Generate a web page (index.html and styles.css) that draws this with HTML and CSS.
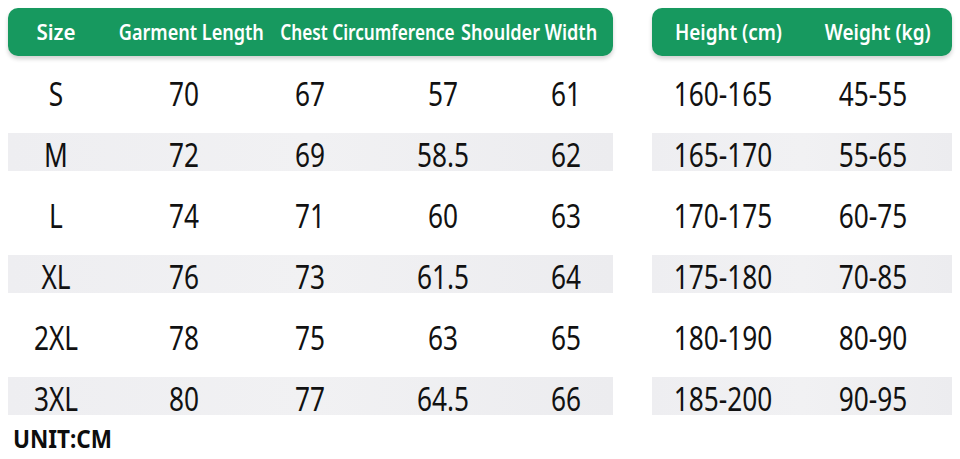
FILE: index.html
```html
<!DOCTYPE html>
<html>
<head>
<meta charset="utf-8">
<link rel="stylesheet" href="styles.css">
</head>
<body>
<div class="page">
  <div class="tables">
    <div class="table left">
      <div class="head">
        <div class="hc"><span class="hl wide">Size</span></div>
        <div class="hc"><span class="hl">Garment Length</span></div>
        <div class="hc"><span class="hl tight">Chest Circumference</span></div>
        <div class="hc"><span class="hl">Shoulder Width</span></div>
      </div>
      <div class="rows">
        <div class="row"><span class="c">S</span><span class="c">70</span><span class="c">67</span><span class="c">57</span><span class="c">61</span></div>
        <div class="row band"><span class="c">M</span><span class="c">72</span><span class="c">69</span><span class="c">58.5</span><span class="c">62</span></div>
        <div class="row"><span class="c">L</span><span class="c">74</span><span class="c">71</span><span class="c">60</span><span class="c">63</span></div>
        <div class="row band"><span class="c">XL</span><span class="c">76</span><span class="c">73</span><span class="c">61.5</span><span class="c">64</span></div>
        <div class="row"><span class="c">2XL</span><span class="c">78</span><span class="c">75</span><span class="c">63</span><span class="c">65</span></div>
        <div class="row band"><span class="c">3XL</span><span class="c">80</span><span class="c">77</span><span class="c">64.5</span><span class="c">66</span></div>
      </div>
    </div>
    <div class="table right">
      <div class="head">
        <div class="hc"><span class="hl">Height (cm)</span></div>
        <div class="hc"><span class="hl">Weight (kg)</span></div>
      </div>
      <div class="rows">
        <div class="row"><span class="c">160-165</span><span class="c">45-55</span></div>
        <div class="row band"><span class="c">165-170</span><span class="c">55-65</span></div>
        <div class="row"><span class="c">170-175</span><span class="c">60-75</span></div>
        <div class="row band"><span class="c">175-180</span><span class="c">70-85</span></div>
        <div class="row"><span class="c">180-190</span><span class="c">80-90</span></div>
        <div class="row band"><span class="c">185-200</span><span class="c">90-95</span></div>
      </div>
    </div>
  </div>
  <div class="unit"><span class="ul">UNIT:CM</span></div>
</div>
</body>
</html>
```
FILE: styles.css
```css
html, body {
  margin: 0;
  padding: 0;
  background: #ffffff;
}
body {
  font-family: "Noto Sans", "Open Sans", sans-serif;
  color: #111111;
  width: 960px;
  height: 459px;
  overflow: hidden;
}
.page {
  padding: 8px 8px 0 8px;
}
.tables {
  display: flex;
  gap: 39px;
}
.left { width: 605px; }
.right { width: 300px; }
.head {
  height: 48px;
  background: #17995f;
  border-radius: 10px;
  box-shadow: 0 3px 4px rgba(0, 0, 0, 0.18);
  display: grid;
  align-items: center;
  color: #ffffff;
}
.left .head { grid-template-columns: 96px 174px 178px 146px; }
.right .head { grid-template-columns: 152px 148px; }
.hc {
  display: flex;
  justify-content: center;
  white-space: nowrap;
  font-size: 21px;
  font-weight: 600;
  line-height: 47px;
  min-width: 0;
}
.hl {
  display: inline-block;
  flex: none;
  transform: scaleX(0.9);
}
.left .hl { transform: scaleX(0.86); }
.left .hl.tight { transform: scaleX(0.82); }
.left .hl.wide { transform: scaleX(0.98); }
.rows {
  margin-top: 16px;
  display: flex;
  flex-direction: column;
  gap: 23px;
}
.row {
  height: 38px;
  display: grid;
  align-items: center;
}
.left .row { grid-template-columns: 96px 160px 92px 174px 72px; }
.right .row { grid-template-columns: 142px 158px; }
.band {
  background: linear-gradient(90deg, #eeeef1, #f1f1f3 50%, #ececef);
}
.c {
  display: block;
  text-align: center;
  font-size: 32px;
  line-height: 38px;
  padding-top: 3px;
  transform: scaleX(0.82);
  white-space: nowrap;
}
.unit {
  margin-top: 6px;
  padding-left: 5px;
}
.ul {
  display: inline-block;
  font-size: 25px;
  font-weight: 700;
  transform: scaleX(0.9);
  transform-origin: left center;
  color: #0d0d0d;
}
```
